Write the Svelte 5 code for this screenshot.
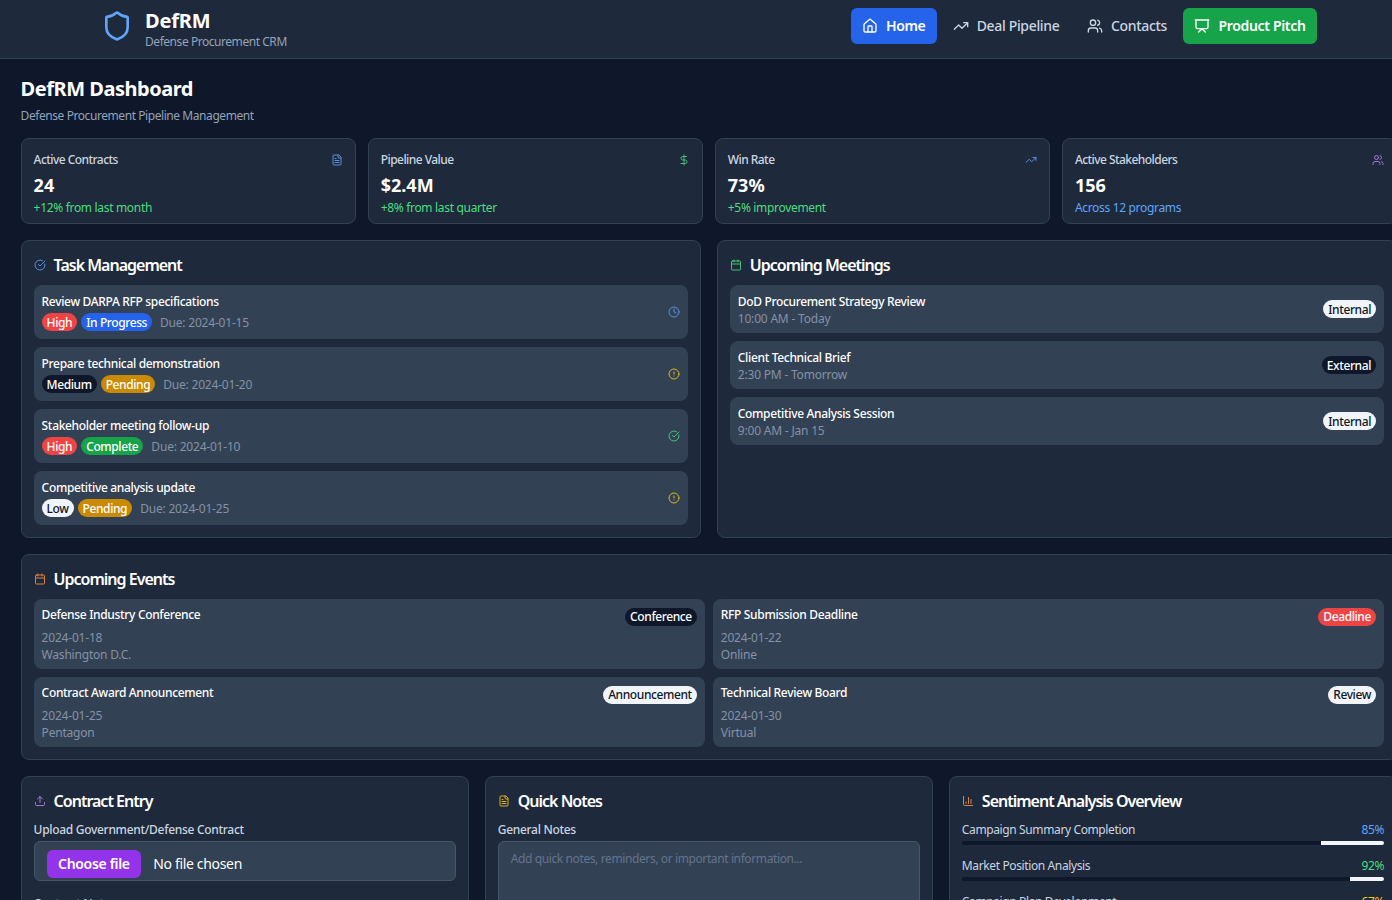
<script>
  const stats = [
    { label: 'Active Contracts', value: '24', sub: '+12% from last month', subc: 'green', icon: 'file', ic: 'blue' },
    { label: 'Pipeline Value', value: '$2.4M', sub: '+8% from last quarter', subc: 'green', icon: 'dollar', ic: 'green' },
    { label: 'Win Rate', value: '73%', sub: '+5% improvement', subc: 'green', icon: 'trend', ic: 'blue' },
    { label: 'Active Stakeholders', value: '156', sub: 'Across 12 programs', subc: 'blue', icon: 'users', ic: 'purple' }
  ];
  const tasks = [
    { t: 'Review DARPA RFP specifications', p: 'High', pc: 'red', s: 'In Progress', sc: 'bblue', d: '2024-01-15', icon: 'clock', ic: 'blue' },
    { t: 'Prepare technical demonstration', p: 'Medium', pc: 'dark', s: 'Pending', sc: 'amber', d: '2024-01-20', icon: 'alert', ic: 'yellow' },
    { t: 'Stakeholder meeting follow-up', p: 'High', pc: 'red', s: 'Complete', sc: 'bgreen', d: '2024-01-10', icon: 'check', ic: 'green' },
    { t: 'Competitive analysis update', p: 'Low', pc: 'light', s: 'Pending', sc: 'amber', d: '2024-01-25', icon: 'alert', ic: 'yellow' }
  ];
  const meetings = [
    { t: 'DoD Procurement Strategy Review', w: '10:00 AM - Today', b: 'Internal', c: 'light' },
    { t: 'Client Technical Brief', w: '2:30 PM - Tomorrow', b: 'External', c: 'dark' },
    { t: 'Competitive Analysis Session', w: '9:00 AM - Jan 15', b: 'Internal', c: 'light' }
  ];
  const events = [
    { t: 'Defense Industry Conference', d: '2024-01-18', l: 'Washington D.C.', b: 'Conference', c: 'dark' },
    { t: 'RFP Submission Deadline', d: '2024-01-22', l: 'Online', b: 'Deadline', c: 'red' },
    { t: 'Contract Award Announcement', d: '2024-01-25', l: 'Pentagon', b: 'Announcement', c: 'light' },
    { t: 'Technical Review Board', d: '2024-01-30', l: 'Virtual', b: 'Review', c: 'light' }
  ];
  const sentiments = [
    { l: 'Campaign Summary Completion', v: 85, c: 'blue' },
    { l: 'Market Position Analysis', v: 92, c: 'green' },
    { l: 'Campaign Plan Development', v: 67, c: 'yellow' }
  ];
</script>

{#snippet icon(name, size, cls)}
  <svg class="ic {cls}" width={size} height={size} viewBox="0 0 24 24" fill="none" stroke="currentColor" stroke-width="2" stroke-linecap="round" stroke-linejoin="round">
    {#if name === 'shield'}
      <path d="M20 13c0 5-3.5 7.5-7.66 8.95a1 1 0 0 1-.67-.01C7.5 20.5 4 18 4 13V6a1 1 0 0 1 1-1c2 0 4.5-1.2 6.24-2.72a1.17 1.17 0 0 1 1.52 0C14.51 3.81 17 5 19 5a1 1 0 0 1 1 1z"/>
    {:else if name === 'home'}
      <path d="M15 21v-8a1 1 0 0 0-1-1h-4a1 1 0 0 0-1 1v8"/><path d="M3 10a2 2 0 0 1 .709-1.528l7-5.999a2 2 0 0 1 2.582 0l7 5.999A2 2 0 0 1 21 10v9a2 2 0 0 1-2 2H5a2 2 0 0 1-2-2z"/>
    {:else if name === 'trend'}
      <polyline points="22 7 13.5 15.5 8.5 10.5 2 17"/><polyline points="16 7 22 7 22 13"/>
    {:else if name === 'users'}
      <path d="M16 21v-2a4 4 0 0 0-4-4H6a4 4 0 0 0-4 4v2"/><circle cx="9" cy="7" r="4"/><path d="M22 21v-2a4 4 0 0 0-3-3.87"/><path d="M16 3.13a4 4 0 0 1 0 7.75"/>
    {:else if name === 'pitch'}
      <path d="M2 3h20"/><path d="M21 3v11a2 2 0 0 1-2 2H5a2 2 0 0 1-2-2V3"/><path d="m7 21 5-5 5 5"/>
    {:else if name === 'file'}
      <path d="M15 2H6a2 2 0 0 0-2 2v16a2 2 0 0 0 2 2h12a2 2 0 0 0 2-2V7Z"/><path d="M14 2v4a2 2 0 0 0 2 2h4"/><path d="M10 9H8"/><path d="M16 13H8"/><path d="M16 17H8"/>
    {:else if name === 'dollar'}
      <line x1="12" x2="12" y1="2" y2="22"/><path d="M17 5H9.5a3.5 3.5 0 0 0 0 7h5a3.5 3.5 0 0 1 0 7H6"/>
    {:else if name === 'check'}
      <path d="M21.801 10A10 10 0 1 1 17 3.335"/><path d="m9 11 3 3L22 4"/>
    {:else if name === 'calendar'}
      <path d="M8 2v4"/><path d="M16 2v4"/><rect width="18" height="18" x="3" y="4" rx="2"/><path d="M3 10h18"/>
    {:else if name === 'clock'}
      <circle cx="12" cy="12" r="10"/><polyline points="12 6 12 12 16 14"/>
    {:else if name === 'alert'}
      <circle cx="12" cy="12" r="10"/><line x1="12" x2="12" y1="8" y2="12"/><line x1="12" x2="12.01" y1="16" y2="16"/>
    {:else if name === 'upload'}
      <path d="M21 15v4a2 2 0 0 1-2 2H5a2 2 0 0 1-2-2v-4"/><polyline points="17 8 12 3 7 8"/><line x1="12" x2="12" y1="3" y2="15"/>
    {:else if name === 'bars'}
      <path d="M3 3v16a2 2 0 0 0 2 2h16"/><path d="M18 17V9"/><path d="M13 17V5"/><path d="M8 17v-3"/>
    {/if}
  </svg>
{/snippet}

<header class="topbar">
  <div class="brand">
    {@render icon('shield', 32, 'blue brandmark')}
    <div class="brandtext">
      <div class="brandname">DefRM</div>
      <div class="brandsub">Defense Procurement CRM</div>
    </div>
  </div>
  <nav class="nav">
    <a class="navitem active">{@render icon('home', 16, '')}Home</a>
    <a class="navitem">{@render icon('trend', 16, '')}Deal Pipeline</a>
    <a class="navitem">{@render icon('users', 16, '')}Contacts</a>
    <a class="navitem pitch">{@render icon('pitch', 16, '')}Product Pitch</a>
  </nav>
</header>

<main class="main">
  <h1 class="title">DefRM Dashboard</h1>
  <p class="subtitle">Defense Procurement Pipeline Management</p>

  <section class="stats">
    {#each stats as s}
      <div class="card stat">
        <div class="stathead">
          <span class="statlabel">{s.label}</span>
          {@render icon(s.icon, 12, s.ic + ' dim')}
        </div>
        <div class="statvalue">{s.value}</div>
        <div class="statsub {s.subc}">{s.sub}</div>
      </div>
    {/each}
  </section>

  <section class="two">
    <div class="card panel">
      <h2 class="ptitle">{@render icon('check', 12, 'blue dim')}Task Management</h2>
      <div class="list">
        {#each tasks as t}
          <div class="row task">
            <div>
              <div class="rowtitle">{t.t}</div>
              <div class="badges">
                <span class="badge {t.pc}">{t.p}</span>
                <span class="badge {t.sc}">{t.s}</span>
                <span class="due">Due: {t.d}</span>
              </div>
            </div>
            {@render icon(t.icon, 12, t.ic + ' dim')}
          </div>
        {/each}
      </div>
    </div>
    <div class="card panel">
      <h2 class="ptitle">{@render icon('calendar', 12, 'green dim')}Upcoming Meetings</h2>
      <div class="list">
        {#each meetings as m}
          <div class="row meeting">
            <div class="meetingtext">
              <div class="rowtitle">{m.t}</div>
              <div class="due">{m.w}</div>
            </div>
            <span class="badge {m.c}">{m.b}</span>
          </div>
        {/each}
      </div>
    </div>
  </section>

  <section class="card panel events">
    <h2 class="ptitle">{@render icon('calendar', 12, 'orange dim')}Upcoming Events</h2>
    <div class="eventgrid">
      {#each events as e}
        <div class="row event">
          <div class="eventhead">
            <div class="rowtitle">{e.t}</div>
            <span class="badge {e.c}">{e.b}</span>
          </div>
          <div class="due">{e.d}</div>
          <div class="due">{e.l}</div>
        </div>
      {/each}
    </div>
  </section>

  <section class="three">
    <div class="card panel">
      <h2 class="ptitle">{@render icon('upload', 12, 'purple dim')}Contract Entry</h2>
      <label class="flabel" for="contract">Upload Government/Defense Contract</label>
      <div class="filebox" id="contract">
        <span class="filebtn">Choose file</span>
        <span class="filename">No file chosen</span>
      </div>
      <label class="flabel second" for="cnotes">Contract Notes</label>
      <textarea id="cnotes" class="area" placeholder="Add notes about this contract..."></textarea>
    </div>
    <div class="card panel">
      <h2 class="ptitle">{@render icon('file', 12, 'yellow dim')}Quick Notes</h2>
      <label class="flabel" for="qnotes">General Notes</label>
      <textarea id="qnotes" class="area tall" placeholder="Add quick notes, reminders, or important information..."></textarea>
    </div>
    <div class="card panel">
      <h2 class="ptitle">{@render icon('bars', 12, 'orange dim')}Sentiment Analysis Overview</h2>
      <div class="sentlist">
        {#each sentiments as s}
          <div class="sent">
            <div class="senthead"><span>{s.l}</span><span class={s.c}>{s.v}%</span></div>
            <div class="track"><div class="fill" style="width:{100 - s.v}%"></div></div>
          </div>
        {/each}
      </div>
    </div>
  </section>
</main>

<style>
  :global(html), :global(body) {
    margin: 0;
    background: #0f172a;
    overflow-x: hidden;
  }
  :global(body) {
    font-family: "Noto Sans", "Open Sans", sans-serif;
    color: #fff;
    font-size: 12px;
    letter-spacing: -0.38px;
  }
  * { box-sizing: border-box; }

  .ic { flex: none; display: block; }
  .dim { opacity: 0.85; }
  .blue { color: #60a5fa; }
  .green { color: #4ade80; }
  .yellow { color: #facc15; }
  .purple { color: #c084fc; }
  .orange { color: #fb923c; }

  .topbar {
    height: 59px;
    background: #1e293b;
    border-bottom: 1px solid #334155;
    display: flex;
    align-items: center;
    justify-content: space-between;
    padding: 0 75px 6px 101px;
  }
  .brand { display: flex; align-items: center; gap: 12px; }
  .brandtext { padding-top: 4px; }
  .brandname { font-size: 20px; font-weight: 700; line-height: 27px; letter-spacing: -0.2px; }
  .brandsub { font-size: 12px; line-height: 15px; color: #94a3b8; letter-spacing: -0.45px; }
  .nav { display: flex; align-items: center; gap: 4.5px; }
  .navitem {
    display: flex; align-items: center; gap: 8px;
    height: 36px; padding: 0 11.5px 2px;
    border-radius: 6px;
    font-size: 14px; font-weight: 500;
    color: #cbd5e1;
    letter-spacing: -0.33px;
  }
  .navitem .ic { margin-top: 2px; }
  .navitem.active { background: #2563eb; color: #fff; font-weight: 600; padding: 0 11.2px 2px; }
  .navitem.pitch { background: #16a34a; color: #fff; font-weight: 600; }

  .main { width: 1418px; padding: 20px 21px 21px 20.6px; }
  .title { margin: 0; font-size: 20px; line-height: 20px; font-weight: 700; letter-spacing: -0.47px; }
  .subtitle { margin: 9px 0 0; font-size: 12px; line-height: 16px; color: #94a3b8; letter-spacing: -0.43px; }

  .card {
    background: #1e293b;
    border: 1px solid #334155;
    border-radius: 8px;
  }
  .stats { display: grid; grid-template-columns: repeat(4, 1fr); gap: 12px; margin-top: 14px; }
  .stat { height: 86px; padding: 12px; }
  .stathead { display: flex; justify-content: space-between; align-items: center; height: 18px; }
  .statlabel { font-size: 12px; line-height: 18px; font-weight: 500; color: #cbd5e1; letter-spacing: -0.55px; }
  .statvalue { font-size: 18px; line-height: 28px; font-weight: 700; margin-top: 2px; letter-spacing: 0; }
  .statsub { font-size: 12px; line-height: 16px; margin-top: 1px; letter-spacing: -0.32px; }

  .two { display: grid; grid-template-columns: 1fr 1fr; gap: 16px; margin-top: 16px; height: 298px; }
  .panel { padding: 12px; }
  .ptitle {
    margin: 0 0 8px; height: 24px;
    display: flex; align-items: center; gap: 8px;
    font-size: 16px; font-weight: 600; color: #fff;
    letter-spacing: -1px;
  }
  .list { display: flex; flex-direction: column; gap: 8px; }
  .row { background: #334155; border-radius: 8px; padding: 8px; }
  .task, .meeting { display: flex; align-items: center; justify-content: space-between; }
  .task { height: 54px; }
  .meeting { height: 48px; }
  .meetingtext { align-self: flex-start; }
  .meetingtext .due { margin-top: 2px; }
  .rowtitle { font-size: 12px; line-height: 18px; height: 16px; font-weight: 500; color: #fff; letter-spacing: -0.33px; }
  .badges { display: flex; align-items: flex-start; gap: 4px; margin-top: 4px; }
  .due { font-size: 12px; line-height: 16px; color: #8492a6; letter-spacing: -0.2px; }
  .badges .due { margin-left: 4px; line-height: 20px; height: 18px; }
  .badge {
    display: inline-block;
    font-size: 12px; line-height: 20px; height: 18px; font-weight: 500;
    padding: 0 5px;
    border-radius: 9px;
    color: #fff;
    white-space: nowrap;
    letter-spacing: -0.4px;
  }
  .badge.red { background: #ef4444; color: #fff; }
  .badge.dark { background: #0f172a; color: #fff; }
  .badge.light { background: #f1f5f9; color: #0f172a; }
  .badge.bblue { background: #2563eb; }
  .badge.bgreen { background: #16a34a; }
  .badge.amber { background: #ca8a04; }

  .events { margin-top: 16px; height: 206px; }
  .eventgrid { display: grid; grid-template-columns: 1fr 1fr; gap: 8px; }
  .event { height: 70px; }
  .eventhead { display: flex; justify-content: space-between; align-items: flex-start; height: 23px; }
  .eventhead .rowtitle { line-height: 16px; }
  .eventhead .badge { margin-top: 1px; line-height: 18px; }
  .event > .due { line-height: 16.5px; }

  .three { display: grid; grid-template-columns: repeat(3, 1fr); gap: 16px; margin-top: 16px; }
  .flabel { display: block; font-size: 12px; line-height: 18px; height: 16px; font-weight: 500; color: #cbd5e1; letter-spacing: -0.3px; }
  .flabel.second { margin-top: 14px; }
  .filebox {
    margin-top: 4px; height: 40px;
    background: #334155; border: 1px solid #475569; border-radius: 6px;
    display: flex; align-items: flex-start; padding: 8px 12px 0;
    font-size: 14px; color: #fff;
    letter-spacing: -0.33px;
  }
  .filebtn {
    background: #9333ea; border-radius: 6px;
    height: 28px; line-height: 28px; padding: 0 11.5px;
    font-weight: 600; margin-right: 12px;
  }
  .filename { line-height: 28px; }
  .area {
    display: block; width: 100%; height: 80px; margin-top: 4px;
    background: #334155; border: 1px solid #475569; border-radius: 6px;
    padding: 9px 12px 8px; resize: none; color: #fff; outline: none;
    font: 12px/16px "Noto Sans", sans-serif;
    letter-spacing: -0.39px;
  }
  .area::placeholder { color: #64748b; }
  .area.tall { height: 120px; }

  .sentlist { display: flex; flex-direction: column; gap: 12px; }
  .senthead { display: flex; justify-content: space-between; font-size: 12px; line-height: 18px; height: 16px; color: #cbd5e1; }
  .track { height: 4px; margin-top: 4px; background: #0f172a; display: flex; justify-content: flex-end; border-radius: 2px; overflow: hidden; }
  .fill { background: #f1f5f9; height: 100%; }
</style>
